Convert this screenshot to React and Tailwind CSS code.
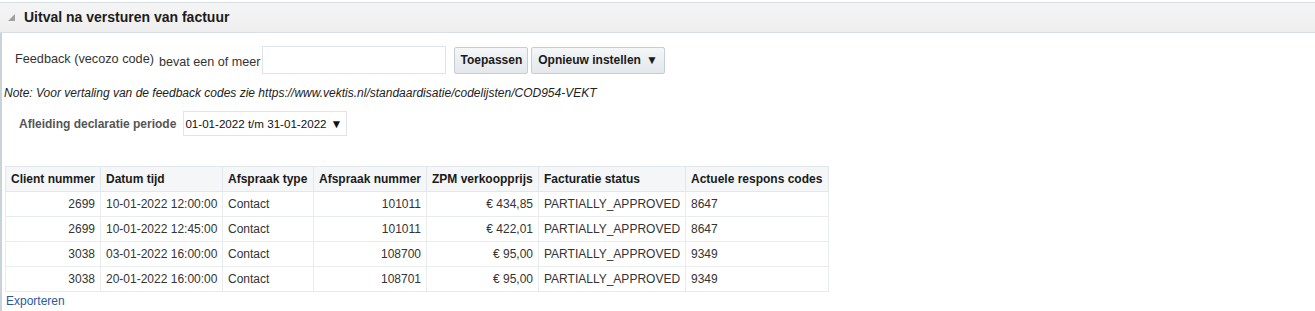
const rows = [
  ['2699', '10-01-2022 12:00:00', 'Contact', '101011', '€ 434,85', 'PARTIALLY_APPROVED', '8647'],
  ['2699', '10-01-2022 12:45:00', 'Contact', '101011', '€ 422,01', 'PARTIALLY_APPROVED', '8647'],
  ['3038', '03-01-2022 16:00:00', 'Contact', '108700', '€ 95,00', 'PARTIALLY_APPROVED', '9349'],
  ['3038', '20-01-2022 16:00:00', 'Contact', '108701', '€ 95,00', 'PARTIALLY_APPROVED', '9349'],
]

const columns = [
  { label: 'Client nummer', w: 'w-[95px]', right: true },
  { label: 'Datum tijd', w: 'w-[122px]' },
  { label: 'Afspraak type', w: 'w-[91px]' },
  { label: 'Afspraak nummer', w: 'w-[113px]', right: true },
  { label: 'ZPM verkoopprijs', w: 'w-[112px]', right: true },
  { label: 'Facturatie status', w: 'w-[147px]' },
  { label: 'Actuele respons codes', w: 'w-[143px]' },
]

export default function App() {
  return (
    <div className="w-[1315px] h-[311px] bg-white overflow-hidden text-[12px] text-[#333] pt-[2px]" style={{ fontFamily: '"Liberation Sans", Arial, sans-serif' }}>
      {/* Header */}
      <div className="h-[31px] border-y border-[#d6dfe6] bg-gradient-to-b from-[#f5f5f5] to-[#eeeeee] flex items-center">
        <svg className="ml-[8px] w-[7px] h-[7px]" viewBox="0 0 7 7">
          <polygon points="7,0 7,7 0,7" fill="#a0a0a0" />
        </svg>
        <span className="ml-[9px] text-[14px] font-bold text-[#1c1c1c]">Uitval na versturen van factuur</span>
      </div>

      <div className="border-l-2 border-[#c9d1d9] h-[278px] pl-[3px]">
        {/* Filter */}
        <div className="flex items-center pt-[13px] pl-[10px] h-[41px]">
          <span className="text-[12.7px] text-[#333]">Feedback (vecozo code)</span>
          <span className="ml-[5px] mt-[4px] text-[12.6px] text-[#333]">bevat een of meer</span>
          <input className="ml-[2px] w-[184px] h-[28px] border border-[#dfe4ea] bg-white outline-none" />
          <button className="ml-[8px] h-[27px] px-[5px] border border-[#c4ced7] bg-gradient-to-b from-[#f4f6f8] to-[#e4e8ec] rounded-[2px] font-bold text-[#1a1a1a]">Toepassen</button>
          <button className="ml-[3px] h-[27px] px-[6px] border border-[#c4ced7] bg-gradient-to-b from-[#f4f6f8] to-[#e4e8ec] rounded-[2px] font-bold text-[#1a1a1a] flex items-center gap-[5px]">
            Opnieuw instellen
            <span className="text-[12px]">▼</span>
          </button>
        </div>

        <div className="mt-[12px] -ml-[1px] italic text-[#222] h-[14px] leading-[14px]">
          Note: Voor vertaling van de feedback codes zie https://www.vektis.nl/standaardisatie/codelijsten/COD954-VEKT
        </div>

        {/* Periode */}
        <div className="flex items-center mt-[11px] pl-[14px]">
          <span className="font-bold text-[#555] text-[12px]">Afleiding declaratie periode</span>
          <div className="ml-[7px] w-[164px] h-[25px] border border-[#dfe4ea] flex items-center pl-[1px] gap-[4px] text-[#111] text-[11.6px] whitespace-nowrap">
            01-01-2022 t/m 31-01-2022
            <span className="text-[12px]">▼</span>
          </div>
        </div>

        {/* Table */}
        <table className="mt-[30px] border-collapse border border-[#d6dfe6] table-fixed w-[824px]">
          <thead>
            <tr className="h-[25px] bg-[#f4f6f8]">
              {columns.map((c) => (
                <th key={c.label} className={`${c.w} border border-[#e2e7ec] font-bold text-[#1a1a1a] text-left px-[5px] whitespace-nowrap`}>{c.label}</th>
              ))}
            </tr>
          </thead>
          <tbody>
            {rows.map((r, i) => (
              <tr key={i} className="h-[25px]">
                {r.map((v, j) => (
                  <td key={j} className={`border border-[#e8ecef] px-[5px] whitespace-nowrap text-[#333] ${columns[j].right ? 'text-right' : 'text-left'}`}>{v}</td>
                ))}
              </tr>
            ))}
          </tbody>
        </table>

        <div className="ml-[1px] text-[#2b58a0]">Exporteren</div>
      </div>
    </div>
  )
}
